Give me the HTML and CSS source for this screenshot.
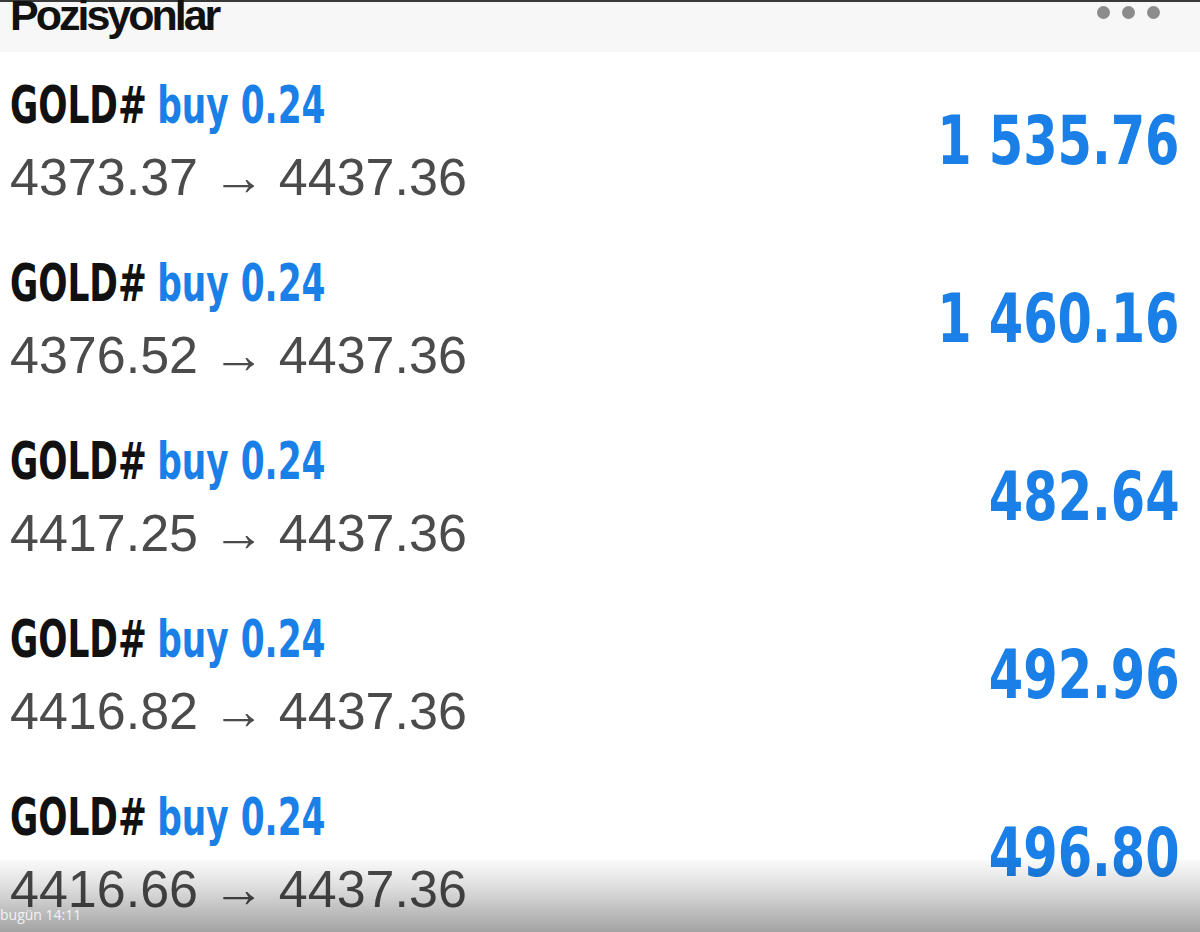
FILE: index.html
```html
<!DOCTYPE html>
<html lang="tr">
<head>
<meta charset="utf-8">
<title>Pozisyonlar</title>
<link rel="stylesheet" href="styles.css">
</head>
<body>
<div class="screen">
  <header class="header">
    <h1 class="title">Pozisyonlar</h1>
    <div class="more"><span class="dot"></span><span class="dot"></span><span class="dot"></span></div>
  </header>
  <ul class="list">
    <li class="row">
      <div class="info">
        <div class="symbol">GOLD# <span class="side">buy 0.24</span></div>
        <div class="prices">4373.37 → 4437.36</div>
      </div>
      <div class="profit">1 535.76</div>
    </li>
    <li class="row">
      <div class="info">
        <div class="symbol">GOLD# <span class="side">buy 0.24</span></div>
        <div class="prices">4376.52 → 4437.36</div>
      </div>
      <div class="profit">1 460.16</div>
    </li>
    <li class="row">
      <div class="info">
        <div class="symbol">GOLD# <span class="side">buy 0.24</span></div>
        <div class="prices">4417.25 → 4437.36</div>
      </div>
      <div class="profit">482.64</div>
    </li>
    <li class="row">
      <div class="info">
        <div class="symbol">GOLD# <span class="side">buy 0.24</span></div>
        <div class="prices">4416.82 → 4437.36</div>
      </div>
      <div class="profit">492.96</div>
    </li>
    <li class="row">
      <div class="info">
        <div class="symbol">GOLD# <span class="side">buy 0.24</span></div>
        <div class="prices">4416.66 → 4437.36</div>
      </div>
      <div class="profit">496.80</div>
    </li>
  </ul>
  <div class="shade"><span class="stamp">bugün 14:11</span></div>
</div>
</body>
</html>
```
FILE: styles.css
```css
html, body {
  margin: 0;
  padding: 0;
  background: #ffffff;
}
.screen {
  position: relative;
  width: 1200px;
  height: 932px;
  overflow: hidden;
  background: #ffffff;
  font-family: "Liberation Sans", Arial, sans-serif;
}
.header {
  height: 50px;
  border-top: 2px solid #3a3a3a;
  background: #f7f7f7;
  display: flex;
  justify-content: space-between;
  align-items: flex-start;
  padding: 0 40px 0 10px;
}
.title {
  margin: -7px 0 0 0;
  font-size: 43px;
  line-height: 40px;
  font-weight: 700;
  letter-spacing: -3px;
  color: #111111;
}
.more {
  display: flex;
  gap: 12px;
  margin-top: 4px;
}
.dot {
  width: 13px;
  height: 13px;
  border-radius: 50%;
  background: #8c8c8c;
}
.list {
  list-style: none;
  margin: 0;
  padding: 0;
}
.row {
  height: 178px;
  display: flex;
  align-items: center;
  justify-content: space-between;
  padding: 0 20px 0 10px;
  box-sizing: border-box;
}
.info {
  display: flex;
  flex-direction: column;
  gap: 17px;
}
.symbol {
  font-family: "DejaVu Sans Condensed", "DejaVu Sans", sans-serif;
  font-stretch: condensed;
  font-weight: 700;
  font-size: 52px;
  line-height: 54px;
  word-spacing: -2px;
  color: #111111;
  transform: scaleX(0.735);
  transform-origin: left center;
  white-space: nowrap;
}
.side {
  color: #1a7fe6;
  word-spacing: 0;
}
.prices {
  font-size: 52px;
  line-height: 56px;
  color: #4b4b4b;
}
.profit {
  font-family: "DejaVu Sans Condensed", "DejaVu Sans", sans-serif;
  font-stretch: condensed;
  font-weight: 700;
  font-size: 67px;
  line-height: 70px;
  color: #1a7fe6;
  transform: scaleX(0.82);
  transform-origin: right center;
  white-space: nowrap;
}
.shade {
  position: absolute;
  left: 0;
  right: 0;
  bottom: 0;
  height: 72px;
  background: linear-gradient(to bottom, rgba(0,0,0,0.02) 0%, rgba(0,0,0,0.12) 35%, rgba(0,0,0,0.36) 100%);
}
.stamp {
  position: absolute;
  left: 0;
  bottom: 8px;
  font-family: "Open Sans", "Liberation Sans", sans-serif;
  font-size: 14px;
  color: rgba(255,255,255,0.85);
}
```
